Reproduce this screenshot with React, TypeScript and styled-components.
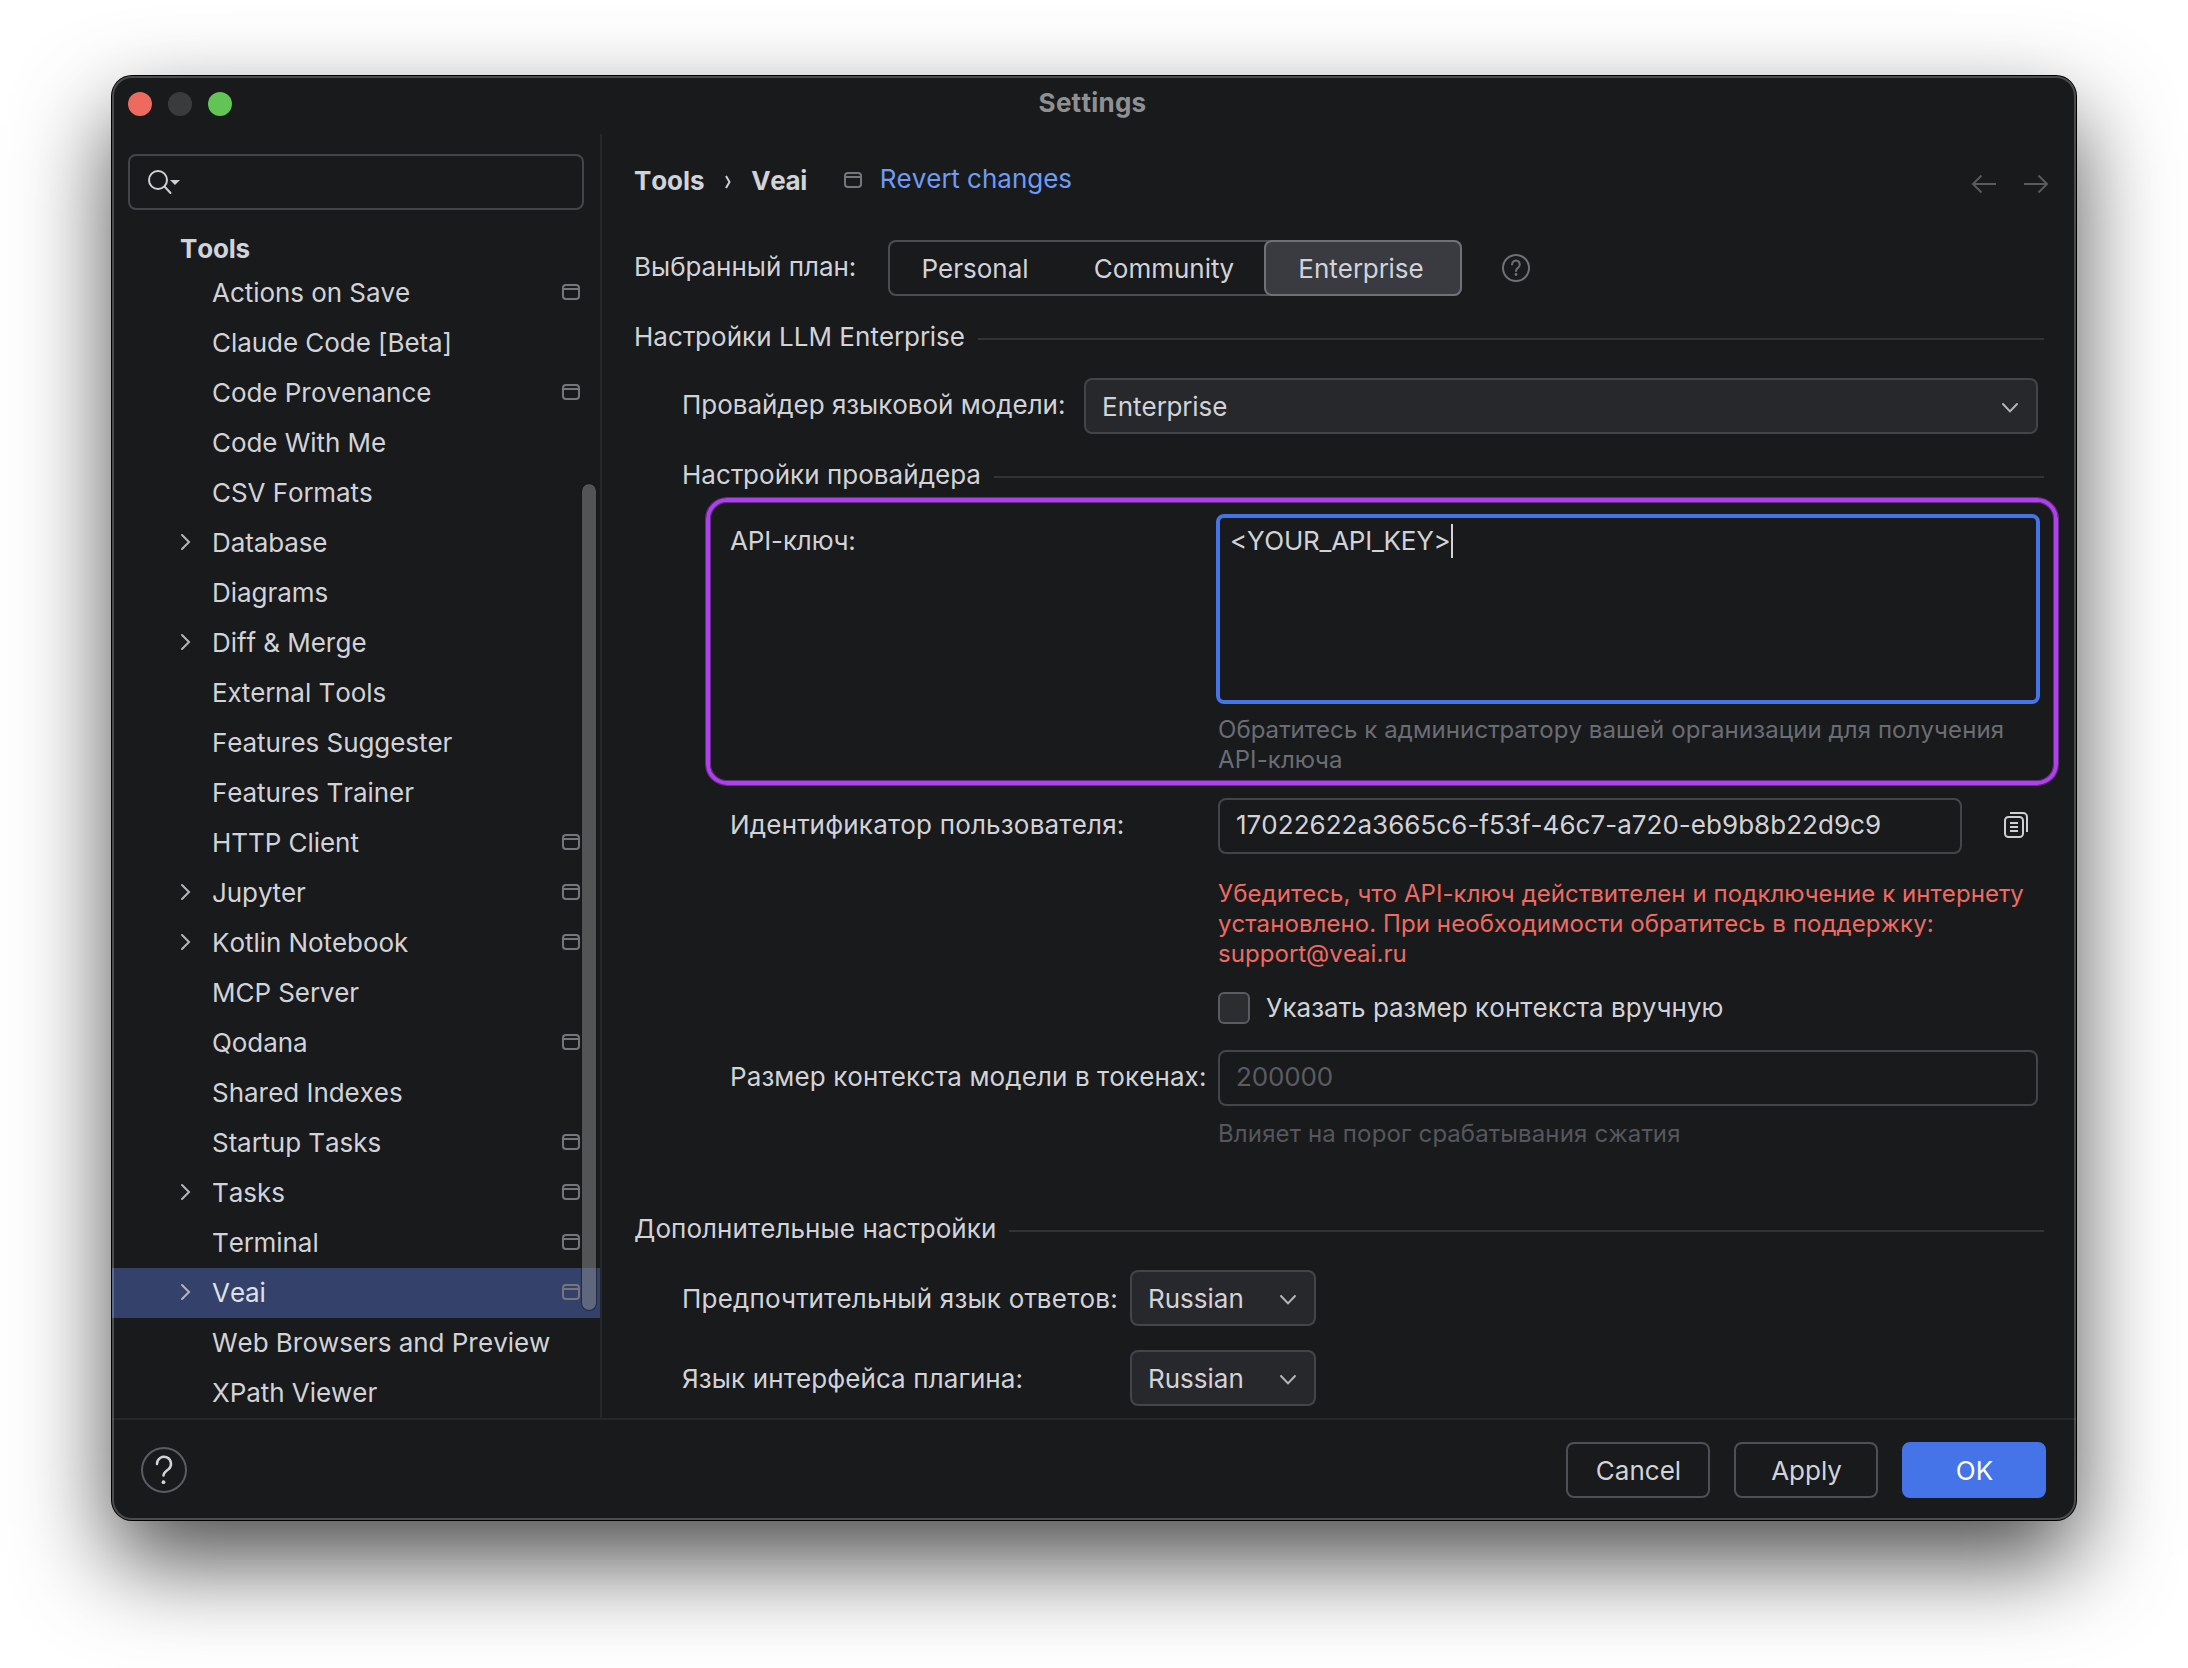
import React from "react";
import styled, { createGlobalStyle, css } from "styled-components";

const Global = createGlobalStyle`
  * { box-sizing: border-box; }
  html, body { margin: 0; background: #fff; }
  body {
    font-family: Inter, "Noto Sans", sans-serif;
    font-size: 26px;
    font-kerning: none;
    font-feature-settings: "calt" 0;
    color: #d1d3d9;
  }
`;

const Desktop = styled.main`
  width: 2188px;
  height: 1668px;
  padding: 76px 112px 148px;
  background: #fff;
  overflow: hidden;
`;

const Window = styled.section`
  position: relative;
  display: flex;
  flex-direction: column;
  width: 1964px;
  height: 1444px;
  border-radius: 20px;
  background: #191a1c;
  box-shadow: 0 0 0 1px #000, 0 41px 94px 0 rgba(0, 0, 0, 0.7);
  &::after {
    content: "";
    position: absolute;
    inset: 0;
    border: 2px solid rgba(255, 255, 255, 0.22);
    border-radius: 20px;
    pointer-events: none;
  }
`;

const TitleBar = styled.header`
  flex: none;
  display: flex;
  align-items: center;
  gap: 16px;
  height: 58px;
  padding: 0 16px 2px;
`;

const Light = styled.span<{ $color: string }>`
  width: 24px;
  height: 24px;
  border-radius: 50%;
  background: ${(p) => p.$color};
`;

const Title = styled.h1`
  flex: 1;
  margin: 0;
  padding: 0 123px 3px 0;
  text-align: center;
  font-size: 26px;
  line-height: 32px;
  font-weight: 700;
  letter-spacing: 0.25px;
  color: #8f9092;
`;

const Body = styled.div`
  flex: none;
  display: flex;
  height: 1284px;
`;

const Sidebar = styled.aside`
  position: relative;
  flex: none;
  width: 490px;
  border-right: 2px solid #26272a;
  padding-top: 20px;
`;

const Search = styled.div`
  display: flex;
  align-items: center;
  width: 456px;
  height: 56px;
  margin-left: 16px;
  padding-left: 16px;
  border: 2px solid #43454b;
  border-radius: 8px;
`;

const TreeHeading = styled.div`
  height: 58px;
  padding: 21px 0 0 68px;
  font-weight: 700;
  line-height: 36px;
  letter-spacing: -0.2px;
`;

const TreeRow = styled.div<{ $selected?: boolean }>`
  display: flex;
  align-items: center;
  height: 50px;
  padding: 0 20px 2px 64px;
  line-height: 46px;
  letter-spacing: -0.05px;
  white-space: nowrap;
  ${(p) => p.$selected && css`background: #33416b; color: #dfe1e5;`}
`;

const Twisty = styled.span`
  display: flex;
  width: 36px;
  padding-left: 4px;
`;

const RowName = styled.span`
  flex: 1;
  padding-top: 2px;
`;

const ScrollThumb = styled.span`
  position: absolute;
  left: 469px;
  top: 349px;
  width: 16px;
  height: 828px;
  border: 1px solid rgba(20, 20, 22, 0.5);
  border-radius: 8px;
  background: rgba(140, 141, 142, 0.5);
  background-clip: padding-box;
`;

const Content = styled.div`
  flex: 1;
  min-width: 0;
  display: flex;
  flex-direction: column;
  padding: 20px 32px 0 32px;
  line-height: 32px;
  white-space: nowrap;
`;

const Crumbs = styled.div`
  display: flex;
  align-items: center;
  height: 56px;
`;

const Crumb = styled.span<{ $track?: number }>`
  font-weight: 700;
  padding-bottom: 3px;
  letter-spacing: ${(p) => p.$track ?? 0}px;
`;

const CrumbSep = styled.span`
  display: flex;
  width: 47px;
  padding-left: 1px;
  justify-content: center;
`;

const Revert = styled.a`
  flex: 1;
  color: #6f9bf8;
  margin-left: 18px;
  padding-bottom: 6px;
`;

const CrumbIcon = styled.span`
  display: flex;
  margin-left: 37px;
  padding-bottom: 4px;
`;

const NavArrows = styled.span`
  display: flex;
  gap: 26px;
  margin-right: -5px;
  padding-top: 4px;
`;

const PlanRow = styled.div`
  display: flex;
  align-items: center;
  height: 56px;
  margin-top: 30px;
`;

const Label = styled.label<{ $w: number; $drop?: number; $track?: number }>`
  flex: none;
  width: ${(p) => p.$w}px;
  margin-top: ${(p) => p.$drop ?? -2}px;
  letter-spacing: ${(p) => p.$track ?? 0}px;
`;

const Segments = styled.div`
  display: flex;
  width: 574px;
  height: 56px;
  border-radius: 8px;
  box-shadow: inset 0 0 0 2px #4b4d53;
`;

const Segment = styled.button<{ $w: number; $nudge?: number; $active?: boolean }>`
  width: ${(p) => p.$w}px;
  border: 0;
  padding: 2px 0 0;
  border-radius: 8px;
  background: none;
  color: inherit;
  font: inherit;
  font-kerning: none;
  text-align: center;
  text-indent: ${(p) => p.$nudge ?? 0}px;
  ${(p) => p.$active && css`background: #393b40; box-shadow: inset 0 0 0 2px #6f7177;`}
`;

const InlineIcon = styled.span<{ $ml: number }>`
  display: flex;
  margin-left: ${(p) => p.$ml}px;
`;

const SectionTitle = styled.div<{ $mt: number; $indent?: number; $track?: number }>`
  display: flex;
  align-items: center;
  height: 32px;
  margin-top: ${(p) => p.$mt}px;
  margin-left: ${(p) => p.$indent ?? 0}px;
  gap: 13px;
  letter-spacing: ${(p) => p.$track ?? 0.04}px;
  &::after {
    content: "";
    flex: 1;
    height: 2px;
    margin-top: 4px;
    background: #323336;
  }
`;

const FormRow = styled.div<{ $mt: number; $indent: number }>`
  display: flex;
  align-items: center;
  margin-top: ${(p) => p.$mt}px;
  margin-left: ${(p) => p.$indent}px;
`;

const Combo = styled.div<{ $w: number }>`
  display: flex;
  align-items: center;
  justify-content: space-between;
  width: ${(p) => p.$w}px;
  height: 56px;
  padding: 2px 17px 0 16px;
  border: 2px solid #43454b;
  border-radius: 8px;
  background: #27282c;
`;

const KeyFrame = styled.div`
  display: flex;
  align-items: flex-start;
  width: 1352px;
  height: 287px;
  margin: 7px 0 1px 72px;
  padding: 12px 0 0 20px;
  border: 4px solid #b03fee;
  border-radius: 21px;
  box-shadow: 0 0 0 1px rgba(176, 63, 238, 0.5), inset 0 0 0 1px rgba(176, 63, 238, 0.5);
`;

const KeyColumn = styled.div`
  width: 824px;
`;

const KeyArea = styled.div`
  display: flex;
  align-items: flex-start;
  height: 190px;
  padding: 6px 10px;
  border: 4px solid #4474e8;
  border-radius: 8px;
  line-height: 34px;
  letter-spacing: -0.25px;
`;

const Caret = styled.span`
  width: 2px;
  height: 34px;
  background: #d1d3d9;
`;

const Note = styled.p<{ $color: string; $mt?: number; $ml?: number; $track?: number }>`
  margin: ${(p) => p.$mt ?? 0}px 0 0 ${(p) => p.$ml ?? 0}px;
  font-size: 24px;
  line-height: 30px;
  letter-spacing: ${(p) => p.$track ?? 0.1}px;
  color: ${(p) => p.$color};
`;

const Field = styled.div<{ $w: number; $muted?: boolean }>`
  width: ${(p) => p.$w}px;
  height: 56px;
  padding: 9px 16px;
  border: 2px solid #43454b;
  border-radius: 8px;
  letter-spacing: 0.03px;
  ${(p) => p.$muted && css`color: #5a5c61; letter-spacing: -0.15px;`}
`;

const CheckRow = styled.label`
  display: flex;
  align-items: center;
  gap: 16px;
  height: 32px;
  margin: 23px 0 0 584px;
  letter-spacing: 0.06px;
`;

const CheckBox = styled.span`
  width: 32px;
  height: 32px;
  border: 2px solid #5a5c63;
  border-radius: 6px;
  background: #2b2d31;
`;

const Footer = styled.footer`
  flex: 1;
  display: flex;
  align-items: center;
  border-top: 2px solid #26272a;
  padding: 0 30px 0 28px;
  gap: 24px;
`;

const Spacer = styled.span`
  flex: 1;
`;

const Button = styled.button<{ $primary?: boolean }>`
  width: 144px;
  height: 56px;
  padding: 0 0 0 1px;
  border: 2px solid ${(p) => (p.$primary ? "#4474e8" : "#4e5057")};
  border-radius: 8px;
  background: ${(p) => (p.$primary ? "#4474e8" : "transparent")};
  color: ${(p) => (p.$primary ? "#fff" : "#d1d3d9")};
  font: inherit;
  font-kerning: none;
`;

const ProjectIcon = () => (
  <svg width="18" height="16" viewBox="0 0 18 16" fill="none" stroke="#74767c" strokeWidth="2">
    <rect x="1" y="1" width="16" height="14" rx="3" />
    <path d="M1 5h16" />
  </svg>
);

const ChevronDown = () => (
  <svg width="18" height="12" viewBox="0 0 18 12" fill="none" stroke="#b4b6bb" strokeWidth="2" strokeLinecap="round">
    <path d="M2 3l7 7.400L16 3" />
  </svg>
);

const ChevronRight = () => (
  <svg width="12" height="18" viewBox="0 0 12 18" fill="none" stroke="#b4b6bb" strokeWidth="2" strokeLinecap="round">
    <path d="M2 2l7 7-7 7" />
  </svg>
);

const Arrow = ({ flip }: { flip?: boolean }) => (
  <svg width="26" height="20" viewBox="0 0 26 20" fill="none" stroke="#5a5b5e" strokeWidth="2" strokeLinejoin="round">
    <path d={flip ? "M1 10h23M15.500 1.500L24 10l-8.500 8.500" : "M25 10H2M10.500 1.500L2 10l8.500 8.500"} />
  </svg>
);

const items: { name: string; project?: boolean; branch?: boolean; selected?: boolean }[] = [
  { name: "Actions on Save", project: true },
  { name: "Claude Code [Beta]" },
  { name: "Code Provenance", project: true },
  { name: "Code With Me" },
  { name: "CSV Formats" },
  { name: "Database", branch: true },
  { name: "Diagrams" },
  { name: "Diff & Merge", branch: true },
  { name: "External Tools" },
  { name: "Features Suggester" },
  { name: "Features Trainer" },
  { name: "HTTP Client", project: true },
  { name: "Jupyter", project: true, branch: true },
  { name: "Kotlin Notebook", project: true, branch: true },
  { name: "MCP Server" },
  { name: "Qodana", project: true },
  { name: "Shared Indexes" },
  { name: "Startup Tasks", project: true },
  { name: "Tasks", project: true, branch: true },
  { name: "Terminal", project: true },
  { name: "Veai", project: true, branch: true, selected: true },
  { name: "Web Browsers and Preview" },
  { name: "XPath Viewer" },
];

export default function App() {
  return (
    <Desktop>
      <Global />
      <Window>
        <TitleBar>
          <Light $color="#ed6a5e" />
          <Light $color="#3a3b3d" />
          <Light $color="#61c454" />
          <Title>Settings</Title>
        </TitleBar>
        <Body>
          <Sidebar>
            <Search>
              <svg width="34" height="26" viewBox="0 0 34 26" fill="none" stroke="#ced0d6" strokeWidth="2" strokeLinecap="round">
                <circle cx="12" cy="11" r="9" />
                <path d="M18.500 17.500l6 6.500" />
                <path d="M24 11h10l-5 5z" fill="#ced0d6" stroke="none" />
              </svg>
            </Search>
            <TreeHeading>Tools</TreeHeading>
            {items.map((it) => (
              <TreeRow key={it.name} $selected={it.selected}>
                <Twisty>{it.branch && <ChevronRight />}</Twisty>
                <RowName>{it.name}</RowName>
                {it.project && <ProjectIcon />}
              </TreeRow>
            ))}
            <ScrollThumb />
          </Sidebar>
          <Content>
            <Crumbs>
              <Crumb $track={-0.1}>Tools</Crumb>
              <CrumbSep>
                <svg width="8" height="14" viewBox="0 0 8 14" fill="none" stroke="#ced0d6" strokeWidth="2">
                  <path d="M2 1l3.500 6L2 13" />
                </svg>
              </CrumbSep>
              <Crumb $track={-0.4}>Veai</Crumb>
              <CrumbIcon><ProjectIcon /></CrumbIcon>
              <Revert>Revert changes</Revert>
              <NavArrows><Arrow /><Arrow flip /></NavArrows>
            </Crumbs>
            <PlanRow>
              <Label $w={254}>Выбранный план:</Label>
              <Segments>
                <Segment $w={174}>Personal</Segment>
                <Segment $w={202} $nudge={2}>Community</Segment>
                <Segment $w={198} $nudge={-4} $active>Enterprise</Segment>
              </Segments>
              <InlineIcon $ml={40}>
                <svg width="28" height="28" viewBox="0 0 28 28" fill="none" stroke="#6f7177" strokeWidth="2" strokeLinecap="round">
                  <circle cx="14" cy="14" r="13" />
                  <path d="M10 10.400a3.900 3.900 0 1 1 6.200 3.200c-1.500 1.100-2.200 1.700-2.200 3.300" />
                  <circle cx="14" cy="20.500" r="1.400" fill="#6f7177" stroke="none" />
                </svg>
              </InlineIcon>
            </PlanRow>
            <SectionTitle $mt={25}>Настройки LLM Enterprise</SectionTitle>
            <FormRow $mt={25} $indent={48}>
              <Label $w={402} $track={-0.03}>Провайдер языковой модели:</Label>
              <Combo $w={954}>Enterprise<ChevronDown /></Combo>
            </FormRow>
            <SectionTitle $mt={25} $indent={48}>Настройки провайдера</SectionTitle>
            <KeyFrame>
              <Label $w={486} $drop={11} $track={-0.15}>API-ключ:</Label>
              <KeyColumn>
                <KeyArea>&lt;YOUR_API_KEY&gt;<Caret /></KeyArea>
                <Note $color="#6a6d74" $mt={11} $ml={2}>
                  Обратитесь к администратору вашей организации для получения
                  <br />
                  API-ключа
                </Note>
              </KeyColumn>
            </KeyFrame>
            <FormRow $mt={12} $indent={96}>
              <Label $w={488} $track={0.2}>Идентификатор пользователя:</Label>
              <Field $w={744}>17022622a3665c6-f53f-46c7-a720-eb9b8b22d9c9</Field>
              <InlineIcon $ml={40}>
                <svg width="28" height="28" viewBox="0 0 28 28" fill="none" stroke="#ced0d6" strokeWidth="2">
                  <rect x="3" y="5" width="18" height="20" rx="3.500" />
                  <path d="M8 1h13a4 4 0 0 1 4 4v15M8 11h8M8 15h8M8 19h8" />
                </svg>
              </InlineIcon>
            </FormRow>
            <Note $color="#ef6a62" $mt={25} $ml={584} $track={0.08}>
              Убедитесь, что API-ключ действителен и подключение к интернету
              <br />
              установлено. При необходимости обратитесь в поддержку:
              <br />
              support@veai.ru
            </Note>
            <CheckRow><CheckBox />Указать размер контекста вручную</CheckRow>
            <FormRow $mt={26} $indent={96}>
              <Label $w={488} $track={0.1}>Размер контекста модели в токенах:</Label>
              <Field $w={820} $muted>200000</Field>
            </FormRow>
            <Note $color="#55575c" $mt={13} $ml={584} $track={0.15}>Влияет на порог срабатывания сжатия</Note>
            <SectionTitle $mt={64} $track={0.08}>Дополнительные настройки</SectionTitle>
            <FormRow $mt={25} $indent={48}>
              <Label $w={448} $drop={2} $track={0.22}>Предпочтительный язык ответов:</Label>
              <Combo $w={186}>Russian<ChevronDown /></Combo>
            </FormRow>
            <FormRow $mt={24} $indent={48}>
              <Label $w={448} $drop={2} $track={0.12}>Язык интерфейса плагина:</Label>
              <Combo $w={186}>Russian<ChevronDown /></Combo>
            </FormRow>
          </Content>
        </Body>
        <Footer>
          <svg width="48" height="48" viewBox="0 0 48 48" fill="none" strokeLinecap="round">
            <circle cx="24" cy="24" r="22" stroke="#5a5c63" strokeWidth="2" />
            <path d="M17 18a7 7 0 1 1 11.500 5.200c-3 2.300-5 3.400-5 6.300" stroke="#d1d3d9" strokeWidth="2.500" />
            <circle cx="23.500" cy="36.200" r="1.900" fill="#d1d3d9" />
          </svg>
          <Spacer />
          <Button>Cancel</Button>
          <Button>Apply</Button>
          <Button $primary>OK</Button>
        </Footer>
      </Window>
    </Desktop>
  );
}
